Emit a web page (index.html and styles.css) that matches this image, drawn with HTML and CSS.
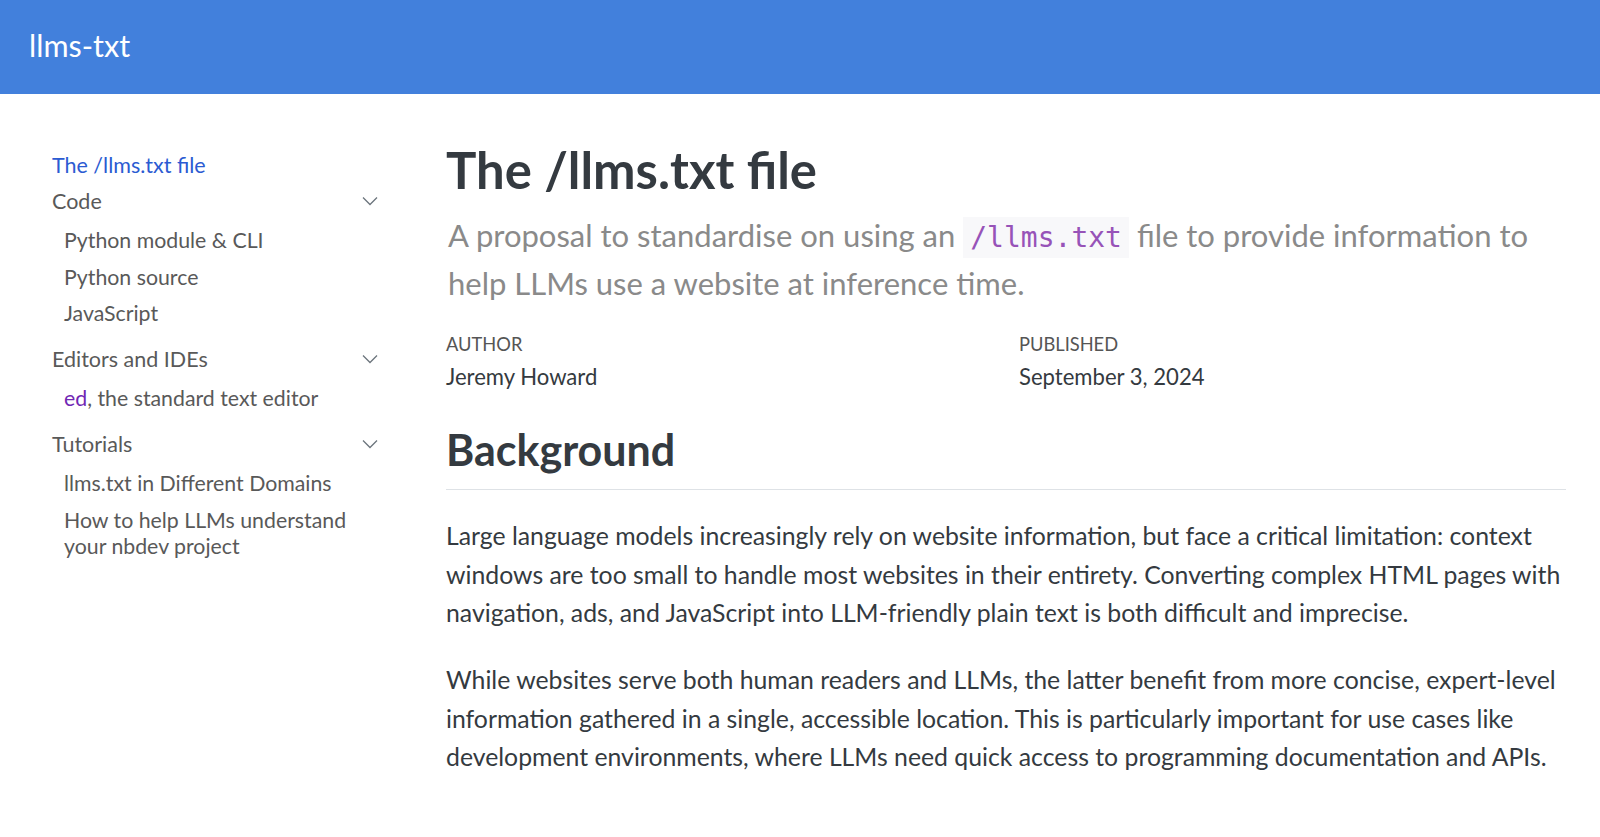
FILE: index.html
```html
<!DOCTYPE html>
<html lang="en">
<head>
  <meta charset="UTF-8">
  <meta name="viewport" content="width=device-width, initial-scale=1.0">
  <title>The /llms.txt file – llms-txt</title>
  <link rel="stylesheet" href="styles.css">
</head>
<body>
  <header class="navbar">
    <a class="navbar-brand" href="#">llms-txt</a>
  </header>

  <div class="page">
    <nav class="sidebar">
      <a class="sidebar-link active" href="#">The /llms.txt file</a>

      <div class="sidebar-section">
        <div class="section-title">Code <span class="chevron"><svg width="16" height="10" viewBox="0 0 16 10"><path d="M1 1.5 L8 8.5 L15 1.5" fill="none" stroke="#6c757d" stroke-width="1.3"/></svg></span></div>
        <a class="sidebar-link sub" href="#">Python module &amp; CLI</a>
        <a class="sidebar-link sub" href="#">Python source</a>
        <a class="sidebar-link sub" href="#">JavaScript</a>
      </div>

      <div class="sidebar-section">
        <div class="section-title">Editors and IDEs <span class="chevron"><svg width="16" height="10" viewBox="0 0 16 10"><path d="M1 1.5 L8 8.5 L15 1.5" fill="none" stroke="#6c757d" stroke-width="1.3"/></svg></span></div>
        <a class="sidebar-link sub" href="#"><span class="visited">ed</span>, the standard text editor</a>
      </div>

      <div class="sidebar-section">
        <div class="section-title">Tutorials <span class="chevron"><svg width="16" height="10" viewBox="0 0 16 10"><path d="M1 1.5 L8 8.5 L15 1.5" fill="none" stroke="#6c757d" stroke-width="1.3"/></svg></span></div>
        <a class="sidebar-link sub" href="#">llms.txt in Different Domains</a>
        <a class="sidebar-link sub" href="#">How to help LLMs understand your nbdev project</a>
      </div>
    </nav>

    <main class="content">
      <h1 class="title">The /llms.txt file</h1>
      <p class="subtitle">A proposal to standardise on using an <code>/llms.txt</code> file to provide information to help LLMs use a website at inference time.</p>

      <div class="meta">
        <div>
          <div class="meta-label">Author</div>
          <div class="meta-value">Jeremy Howard</div>
        </div>
        <div>
          <div class="meta-label">Published</div>
          <div class="meta-value">September 3, 2024</div>
        </div>
      </div>

      <h2>Background</h2>
      <p>Large language models increasingly rely on website information, but face a critical limitation: context windows are too small to handle most websites in their entirety. Converting complex HTML pages with navigation, ads, and JavaScript into LLM-friendly plain text is both difficult and imprecise.</p>
      <p>While websites serve both human readers and LLMs, the latter benefit from more concise, expert-level information gathered in a single, accessible location. This is particularly important for use cases like development environments, where LLMs need quick access to programming documentation and APIs.</p>
    </main>
  </div>
</body>
</html>
```

FILE: styles.css
```css
body {
  margin: 0;
  font-family: Lato, "Noto Sans", sans-serif;
  color: #343a40;
  background-color: #fff;
}
a {
  text-decoration: none;
}

/* top bar */
.navbar {
  height: 94px;
  background-color: #4280dc;
  display: flex;
  align-items: center;
  padding-left: 29px;
}
.navbar-brand {
  color: #fff;
  font-size: 30.5px;
  margin-top: -4px;
}

.page {
  display: flex;
}

/* sidebar */
.sidebar {
  width: 328px;
  padding: 52.5px 0 0 52px;
  display: flex;
  flex-direction: column;
}
.sidebar-link,
.section-title {
  display: block;
  font-size: 21.5px;
  line-height: 26.5px;
  padding: 5px 0;
  color: #595959;
}
.sidebar-link.active {
  color: #2b5bd2;
}
.sidebar-link.sub {
  padding: 6px 0 4px 12px;
  font-size: 21.3px;
}
.sidebar-section + .sidebar-section {
  margin-top: 10.5px;
}
.section-title {
  display: flex;
  justify-content: space-between;
  align-items: center;
  margin-bottom: 1.5px;
}
.chevron {
  display: flex;
  padding-right: 2px;
}
.visited {
  color: #7127b4;
}

/* main */
.content {
  width: 1120px;
  margin-left: 66px;
  padding-top: 48px;
}
.title {
  font-size: 50.8px;
  font-weight: 700;
  line-height: 56px;
  margin: 0 0 13px;
}
.subtitle {
  font-size: 31px;
  line-height: 48px;
  color: #8a8a8a;
  margin: 0 0 24px 2px;
}
code {
  font-family: "DejaVu Sans Mono", monospace;
  font-size: 28px;
  line-height: 1;
  color: #9753b8;
  background-color: #f8f8fa;
  padding: 4px 7px;
}
.meta {
  display: grid;
  grid-template-columns: 573px 1fr;
}
.meta-label {
  font-size: 18.3px;
  line-height: 26px;
  text-transform: uppercase;
  color: #555;
  margin-bottom: 5px;
}
.meta-value {
  font-size: 22.1px;
  line-height: 30px;
  color: #343a40;
}
h2 {
  font-size: 43px;
  font-weight: 700;
  line-height: 48px;
  margin: 34px 0 27px;
  padding-bottom: 15px;
  border-bottom: 1px solid #dee2e6;
}
p {
  font-size: 24.8px;
  line-height: 38.5px;
  margin: 0 0 28.5px;
}
```
